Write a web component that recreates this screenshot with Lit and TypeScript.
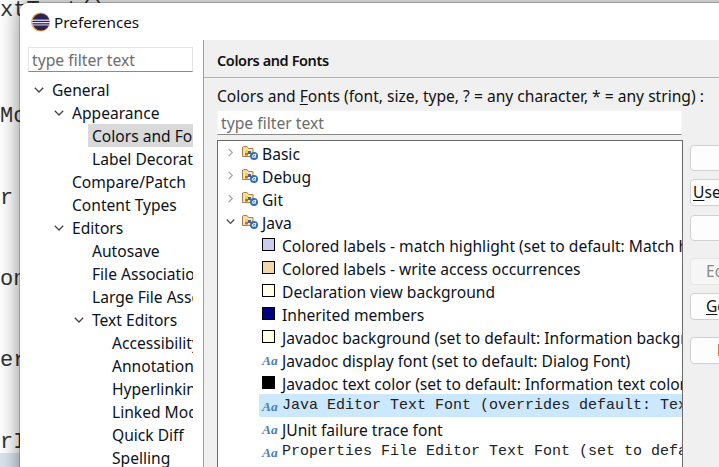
import { LitElement, html, css, svg } from "lit";
import { customElement } from "lit/decorators.js";

type Side = { t: string; lvl: number; open?: boolean; sel?: boolean };
const side: Side[] = [
  { t: "General", lvl: 0, open: true },
  { t: "Appearance", lvl: 1, open: true },
  { t: "Colors and Fonts", lvl: 2, sel: true },
  { t: "Label Decorations", lvl: 2 },
  { t: "Compare/Patch", lvl: 1 },
  { t: "Content Types", lvl: 1 },
  { t: "Editors", lvl: 1, open: true },
  { t: "Autosave", lvl: 2 },
  { t: "File Associations", lvl: 2 },
  { t: "Large File Associations", lvl: 2 },
  { t: "Text Editors", lvl: 2, open: true },
  { t: "Accessibility", lvl: 3 },
  { t: "Annotations", lvl: 3 },
  { t: "Hyperlinking", lvl: 3 },
  { t: "Linked Mode", lvl: 3 },
  { t: "Quick Diff", lvl: 3 },
  { t: "Spelling", lvl: 3 },
];

type Item = { t: string; c?: string; mono?: boolean; sel?: boolean };
const items: Item[] = [
  { t: "Colored labels - match highlight (set to default: Match highlight)", c: "#ccccee" },
  { t: "Colored labels - write access occurrences", c: "#f0d8a8" },
  { t: "Declaration view background", c: "#ffffe8" },
  { t: "Inherited members", c: "#000080" },
  { t: "Javadoc background (set to default: Information background)", c: "#ffffe1" },
  { t: "Javadoc display font (set to default: Dialog Font)" },
  { t: "Javadoc text color (set to default: Information text color)", c: "#000000" },
  { t: "Java Editor Text Font (overrides default: Text Font)", mono: true, sel: true },
  { t: "JUnit failure trace font" },
  { t: "Properties File Editor Text Font (set to default: Text Font)", mono: true },
];

const chevOpen = svg`<svg class="chev" viewBox="0 0 10 6"><path d="M.8.8 5 5 9.2.8" fill="none" stroke="#444" stroke-width="1.3"/></svg>`;
const chevClosed = svg`<svg class="chev" viewBox="0 0 10 10"><path d="M3 1l4 4-4 4" fill="none" stroke="#a0a0a0" stroke-width="1.3"/></svg>`;
const folder = svg`<svg class="folder" viewBox="0 0 16 16">
  <path d="M.5 3V12.5H11V4.5H6.5L5 2.5H1.5Z" fill="#f2d9a6" stroke="#a9814c"/>
  <rect x="2" y="5.5" width="8" height="6" fill="#f8ecc8"/>
  <rect x="3" y="6" width="3" height="3" fill="#f5d800"/>
  <rect x="3" y="9" width="3" height="2.5" fill="#d8641e"/>
  <rect x="6" y="7" width="3" height="3" fill="#4a5fa8"/>
  <circle cx="12" cy="12" r="4" fill="#2f6fb0"/>
  <path d="M13.8 9.8 12.9 14M13 10.6Q10.4 10 10.2 12.8 10.4 14.4 12.9 12.4" fill="none" stroke="#fff" stroke-width="1"/>
</svg>`;
const logo = svg`<svg class="logo" viewBox="0 0 20 20">
  <circle cx="10.5" cy="10" r="9.5" fill="#f5a33c"/>
  <circle cx="11" cy="10" r="8.6" fill="#2c2255"/>
  <rect x="1.5" y="7.6" width="18.5" height="1.2" fill="#e6e2f2"/>
  <rect x="1.5" y="10" width="18.5" height="1.2" fill="#e6e2f2"/>
  <rect x="2" y="12.4" width="17.5" height="1.1" fill="#cfc9e4"/>
</svg>`;

@customElement("app-root")
export class AppRoot extends LitElement {
  static styles = css`
    :host { display: block; width: 719px; height: 467px; position: relative; overflow: hidden; background: #fff; font-family: "Noto Sans", "Open Sans", sans-serif; }
    .code { position: absolute; left: 0; font: 22px/26px "Liberation Mono", monospace; color: #333; white-space: pre; }
    .c0 { top: -2px; } .c1 { top: 104px; } .c2 { top: 186px; } .c3 { top: 267px; } .c4 { top: 348px; } .c5 { top: 430px; }
    .curline { position: absolute; left: 0; right: 0; top: 453px; bottom: 0; background: #dbe5f2; }
    .win { position: absolute; left: 20px; top: 3px; width: 760px; height: 520px; background: #fff; border-radius: 8px 0 0 0; box-shadow: 0 0 22px rgba(0,0,0,.5), 0 0 0 1px rgba(0,0,0,.18); display: flex; flex-direction: column; font-size: 15.6px; color: #000; }
    .title { height: 37px; flex: none; display: flex; align-items: center; padding-left: 10px; gap: 4px; font-size: 15.3px; color: #111; box-sizing: border-box; }
    .logo { width: 20px; height: 20px; flex: none; }
    .body { flex: 1; display: flex; min-height: 0; }
    .left { width: 175px; flex: none; border-right: 1px solid #a0a0a0; padding-left: 8px; }
    .filter { box-sizing: border-box; height: 25px; background: #fff; border: 1px solid #e3e3e3; border-bottom: 1px solid #8a8a8a; color: #6d6d6d; font-size: 15.7px; line-height: 24px; padding-left: 3px; white-space: nowrap; overflow: hidden; }
    .f1 { width: 165px; margin-top: 7px; }
    .stree { width: 165px; margin-top: 6px; overflow: hidden; }
    .srow { height: 23px; display: flex; align-items: center; white-space: nowrap; overflow: hidden; color: #0b1220; }
    .l0 { padding-left: 24px; } .l1 { padding-left: 44px; } .l2 { padding-left: 64px; } .l3 { padding-left: 84px; }
    .txt { align-self: stretch; line-height: 25px; }
    .srow.sel .txt { background: #d9d9d9; flex: 1; padding-left: 4px; margin-left: -4px; overflow: hidden; }
    .arrow { position: relative; width: 0; height: 0; }
    .chev { position: absolute; left: -18px; top: -3px; width: 10px; height: 6px; display: block; overflow: visible; }
    .right { flex: 1; background: #f0f0f0; display: flex; flex-direction: column; min-width: 0; }
    .head { height: 38px; flex: none; box-sizing: border-box; border-bottom: 1px solid #b4b4b4; padding-left: 13px; font-weight: 600; font-size: 14.5px; letter-spacing: -0.4px; line-height: 40px; color: #111; white-space: nowrap; }
    .content { padding: 6px 0 0 13px; flex: 1; min-height: 0; display: flex; flex-direction: column; }
    .lbl { height: 26px; line-height: 24px; white-space: nowrap; color: #111; }
    u { text-underline-offset: 2px; }
    .f2 { width: 465px; height: 25px; margin-bottom: 5px; border-color: #f4f4f4; border-bottom-color: #8a8a8a; }
    .main { flex: 1; display: flex; min-height: 0; gap: 7px; }
    .tree { width: 466px; box-sizing: border-box; border: 1px solid #6a6a6a; border-bottom: none; background: #fff; overflow: hidden; flex: none; }
    .row { height: 23px; display: flex; align-items: center; white-space: nowrap; overflow: hidden; color: #0b1220; }
    .name { padding-top: 2px; }
    .top { padding-left: 7px; }
    .tchev { width: 10px; height: 10px; flex: none; display: flex; align-items: center; justify-content: center; margin-right: 7px; }
    .tchev .chev { position: static; width: 9px; height: 9px; }
    .folder { width: 16px; height: 16px; flex: none; margin-right: 4px; margin-top: -2px; }
    .item { padding-left: 44px; box-sizing: border-box; }
    .item.sel { background: #cce8ff; margin-left: 41px; padding-left: 3px; border-radius: 2px 0 0 2px; }
    .sw { width: 13px; height: 13px; box-sizing: border-box; border: 1px solid #000; flex: none; margin-right: 7px; margin-top: -1px; }
    .aa { width: 13px; flex: none; margin-right: 7px; padding-top: 2px; font: italic bold 13.5px "Liberation Serif", serif; color: #4b7db5; white-space: nowrap; }
    .mono { font: 15px "Liberation Mono", monospace; color: #222; padding-top: 0; }
    .btns { width: 120px; flex: none; padding-top: 5px; display: flex; flex-direction: column; }
    .btn { box-sizing: border-box; height: 27px; background: #fdfdfd; border: 1px solid #d0d0d0; border-radius: 4px; line-height: 25px; white-space: nowrap; overflow: hidden; color: #111; margin-bottom: 8px; flex: none; }
    .btn.dis { background: #f6f6f6; border-color: #e6e6e6; color: #8a8a8a; }
    .gap { margin-bottom: 17px; }
    .pa { padding-left: 2px; } .pb { padding-left: 15px; } .pc { padding-left: 26px; } .pz { padding-left: 60px; }
    .b3 { height: 26px; }
    .pa { margin-bottom: 9px; }
  `;

  render() {
    return html`
      <div class="curline"></div>
      <div class="code c0">xtText()</div>
      <div class="code c1">Mo</div>
      <div class="code c2">r</div>
      <div class="code c3">on</div>
      <div class="code c4">er</div>
      <div class="code c5">rI</div>
      <div class="win">
        <div class="title">${logo}<span>Preferences</span></div>
        <div class="body">
          <div class="left">
            <div class="filter f1">type filter text</div>
            <div class="stree">
              ${side.map(s => html`<div class="srow l${s.lvl} ${s.sel ? "sel" : ""}">
                ${s.open ? html`<span class="arrow">${chevOpen}</span>` : ""}
                <span class="txt">${s.t}</span>
              </div>`)}
            </div>
          </div>
          <div class="right">
            <div class="head">Colors and Fonts</div>
            <div class="content">
              <div class="lbl">Colors and <u>F</u>onts (font, size, type, ? = any character, * = any string) :</div>
              <div class="filter f2">type filter text</div>
              <div class="main">
                <div class="tree">
                  ${["Basic", "Debug", "Git", "Java"].map((t, i) => html`<div class="row top">
                    <span class="tchev">${i === 3 ? chevOpen : chevClosed}</span>${folder}<span class="name">${t}</span>
                  </div>`)}
                  ${items.map(it => html`<div class="row item ${it.sel ? "sel" : ""}">
                    ${it.mono || !it.c ? html`<span class="aa">Aa</span>` : html`<span class="sw" style="background:${it.c}"></span>`}
                    <span class=${it.mono ? "mono" : "name"}>${it.t}</span>
                  </div>`)}
                </div>
                <div class="btns">
                  <div class="btn pz b3">Edit...</div>
                  <div class="btn pa"><u>U</u>se System Font</div>
                  <div class="btn pz gap b3">Reset</div>
                  <div class="btn dis pb">Edit Default</div>
                  <div class="btn pb gap"><u>G</u>o to Default</div>
                  <div class="btn pc">Expand All</div>
                </div>
              </div>
            </div>
          </div>
        </div>
      </div>
    `;
  }
}
